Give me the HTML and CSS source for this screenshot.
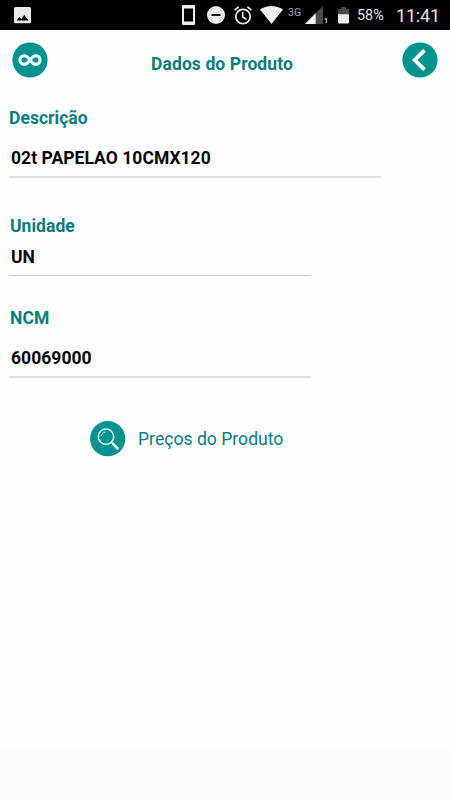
FILE: index.html
```html
<!DOCTYPE html>
<html lang="pt-BR">
<head>
<meta charset="utf-8">
<title>Dados do Produto</title>
<link rel="stylesheet" href="styles.css">
</head>
<body>
<div class="status">
  <svg class="picture" width="17" height="17" viewBox="0 0 17 17"><rect width="17" height="16.3" rx="1.5" fill="#e8e8e8"/><path d="M2.7 13.5L5.3 9.7l2 2.4 3-4.2 4.2 5.6z" fill="#000"/></svg>
  <svg class="phone" width="13" height="20" viewBox="0 0 13 20"><path fill-rule="evenodd" d="M1 0h11a1 1 0 0 1 1 1v18a1 1 0 0 1-1 1H1a1 1 0 0 1-1-1V1a1 1 0 0 1 1-1zM2 3.6v12.8h9V3.6z" fill="#eee"/></svg>
  <svg class="dnd" width="18" height="18" viewBox="0 0 18 18"><circle cx="9" cy="9" r="9" fill="#eee"/><path d="M4.500 9h9" stroke="#000" stroke-width="1.9"/></svg>
  <svg class="alarm" width="18" height="19" viewBox="0 0 18 19" fill="none" stroke="#eee" stroke-width="1.7"><circle cx="9" cy="10.5" r="7.2"/><path d="M8.7 6v5l3.8 2.4M.6 4.1l4-3.2M17.4 4.1l-4-3.2"/></svg>
  <svg class="wifi" width="23" height="18" viewBox="0 0 23 18"><path d="M11.5 18L0 3.6C6.5-1.2 16.5-1.2 23 3.6z" fill="#eee"/></svg>
  <span class="network">3G</span>
  <svg class="signal" width="18" height="18" viewBox="0 0 18 18"><path d="M0 18L18 0v18z" fill="#484848"/><path d="M0 18L10.7 7.3V18z" fill="#f0f0f0"/></svg>
  <span class="sim">1</span>
  <svg class="battery" width="11" height="17" viewBox="0 0 11 17"><path d="M3 0h5v2h3v6H0V2h3z" fill="#494949"/><path d="M0 7.2h11V15.5a1 1 0 0 1-1 1H1a1 1 0 0 1-1-1z" fill="#eee"/></svg>
  <span class="percent">58%</span>
  <span class="clock">11:41</span>
</div>
<header class="header">
  <svg class="round" width="36" height="36" viewBox="0 0 36 36"><circle cx="18" cy="18" r="17.6" fill="#009390"/><path d="M18 18C15.700 14.800 14.400 13.700 12.200 13.700a4.300 4.300 0 0 0 0 8.600C14.400 22.300 15.700 21.200 18 18S21.600 13.700 23.800 13.700a4.300 4.300 0 0 1 0 8.600C21.600 22.300 20.300 21.200 18 18z" fill="none" stroke="#f2fbfb" stroke-width="3.1"/></svg>
  <h1 class="title">Dados do Produto</h1>
  <svg class="round" width="36" height="36" viewBox="0 0 36 36"><circle cx="18" cy="18" r="17.6" fill="#009390"/><path d="M23.400 8.400L13.700 18l9.700 9.600" transform="translate(-1 0)" fill="none" stroke="#fff" stroke-width="3.9"/></svg>
</header>
<main class="form">
  <section class="field description">
    <div class="label">Descrição</div>
    <div class="value">02t PAPELAO 10CMX120</div>
  </section>
  <section class="field unit">
    <div class="label">Unidade</div>
    <div class="value">UN</div>
  </section>
  <section class="field ncm">
    <div class="label">NCM</div>
    <div class="value">60069000</div>
  </section>
  <div class="prices">
    <svg class="round" width="36" height="36" viewBox="0 0 36 36"><circle cx="17.700" cy="17.700" r="17.600" fill="#009390"/><g fill="none" stroke="#d5f3f2"><circle cx="16" cy="15.700" r="7.700" stroke-width="1.600"/><path d="M11.300 15.200a4.900 4.900 0 0 1 4.200-4.400" stroke-width="1"/><path d="M21.500 21.200l1.500 1.500" stroke-width="1.500"/><path d="M23 22.700l4.500 4.700" stroke-width="2.800" stroke-linecap="round"/></g></svg>
    <span class="prices-text">Preços do Produto</span>
  </div>
</main>
<footer class="footer"></footer>
</body>
</html>
```
FILE: styles.css
```css
* {
  box-sizing: border-box;
}

body {
  margin: 0;
  height: 800px;
  display: flex;
  flex-direction: column;
  overflow: hidden;
  background: #fefefe;
  font-family: Roboto, sans-serif;
}

svg {
  display: block;
  flex: none;
}

.status {
  height: 30px;
  flex: none;
  display: flex;
  align-items: flex-start;
  padding-left: 14px;
  background: #000;
  color: #e4e4e4;
  white-space: nowrap;
}

.picture { margin-top: 7px; }
.phone { margin: 5px 0 0 151px; }
.dnd { margin: 6px 0 0 12px; }
.alarm { margin: 6px 0 0 9px; }
.wifi { margin: 6px 0 0 8px; }

.network {
  width: 17px;
  margin: 6px 0 0 5px;
  font-size: 10.5px;
  line-height: 13px;
  color: #aaa;
}

.signal { margin-top: 6px; }

.sim {
  width: 13px;
  margin-top: 17px;
  padding-left: 1px;
  font-size: 7px;
  font-weight: 700;
  line-height: 8px;
}

.battery { margin: 7px 0 0 2px; }

.percent {
  width: 39px;
  margin: 6px 0 0 8px;
  font-size: 14.4px;
  line-height: 20px;
}

.clock {
  margin-top: 5px;
  font-size: 18px;
  letter-spacing: -0.2px;
  line-height: 22px;
}

.header {
  height: 60px;
  flex: none;
  display: flex;
  align-items: center;
  justify-content: space-between;
  padding: 0 12px;
}

.title {
  margin: 8px 6px 0 0;
  font-size: 17.5px;
  font-weight: 700;
  letter-spacing: 0.1px;
  line-height: 24px;
  color: #087f7c;
}

.form {
  flex: none;
  height: 658px;
  padding-left: 9px;
}

.field {
  width: 302px;
  border-bottom: 1px solid #ccc;
  font-size: 17.5px;
  font-weight: 700;
  letter-spacing: 0.04px;
  line-height: 24px;
  white-space: nowrap;
}

.label {
  height: 24px;
  padding-left: 1px;
  color: #087f7c;
}

.value {
  height: 24px;
  padding-left: 2px;
  color: #080808;
}

.description {
  width: 372px;
  height: 88px;
  padding-top: 16px;
  border-bottom: 2px solid #dedede;
}

.description .label {
  padding-left: 0;
}

.description .value {
  margin-top: 16px;
}

.unit {
  height: 98px;
  padding-top: 36px;
}

.unit .value {
  margin-top: 7px;
}

.ncm {
  height: 102px;
  padding-top: 30px;
  border-bottom: 2px solid #dedede;
}

.ncm .value {
  margin-top: 16px;
}

.prices {
  display: flex;
  align-items: center;
  gap: 12px;
  margin: 43px 0 0 81px;
}

.prices-text {
  font-size: 17.6px;
  line-height: 24px;
  color: #087f7c;
}

.footer {
  flex: 1;
  background: #fcfcfc;
}
```
